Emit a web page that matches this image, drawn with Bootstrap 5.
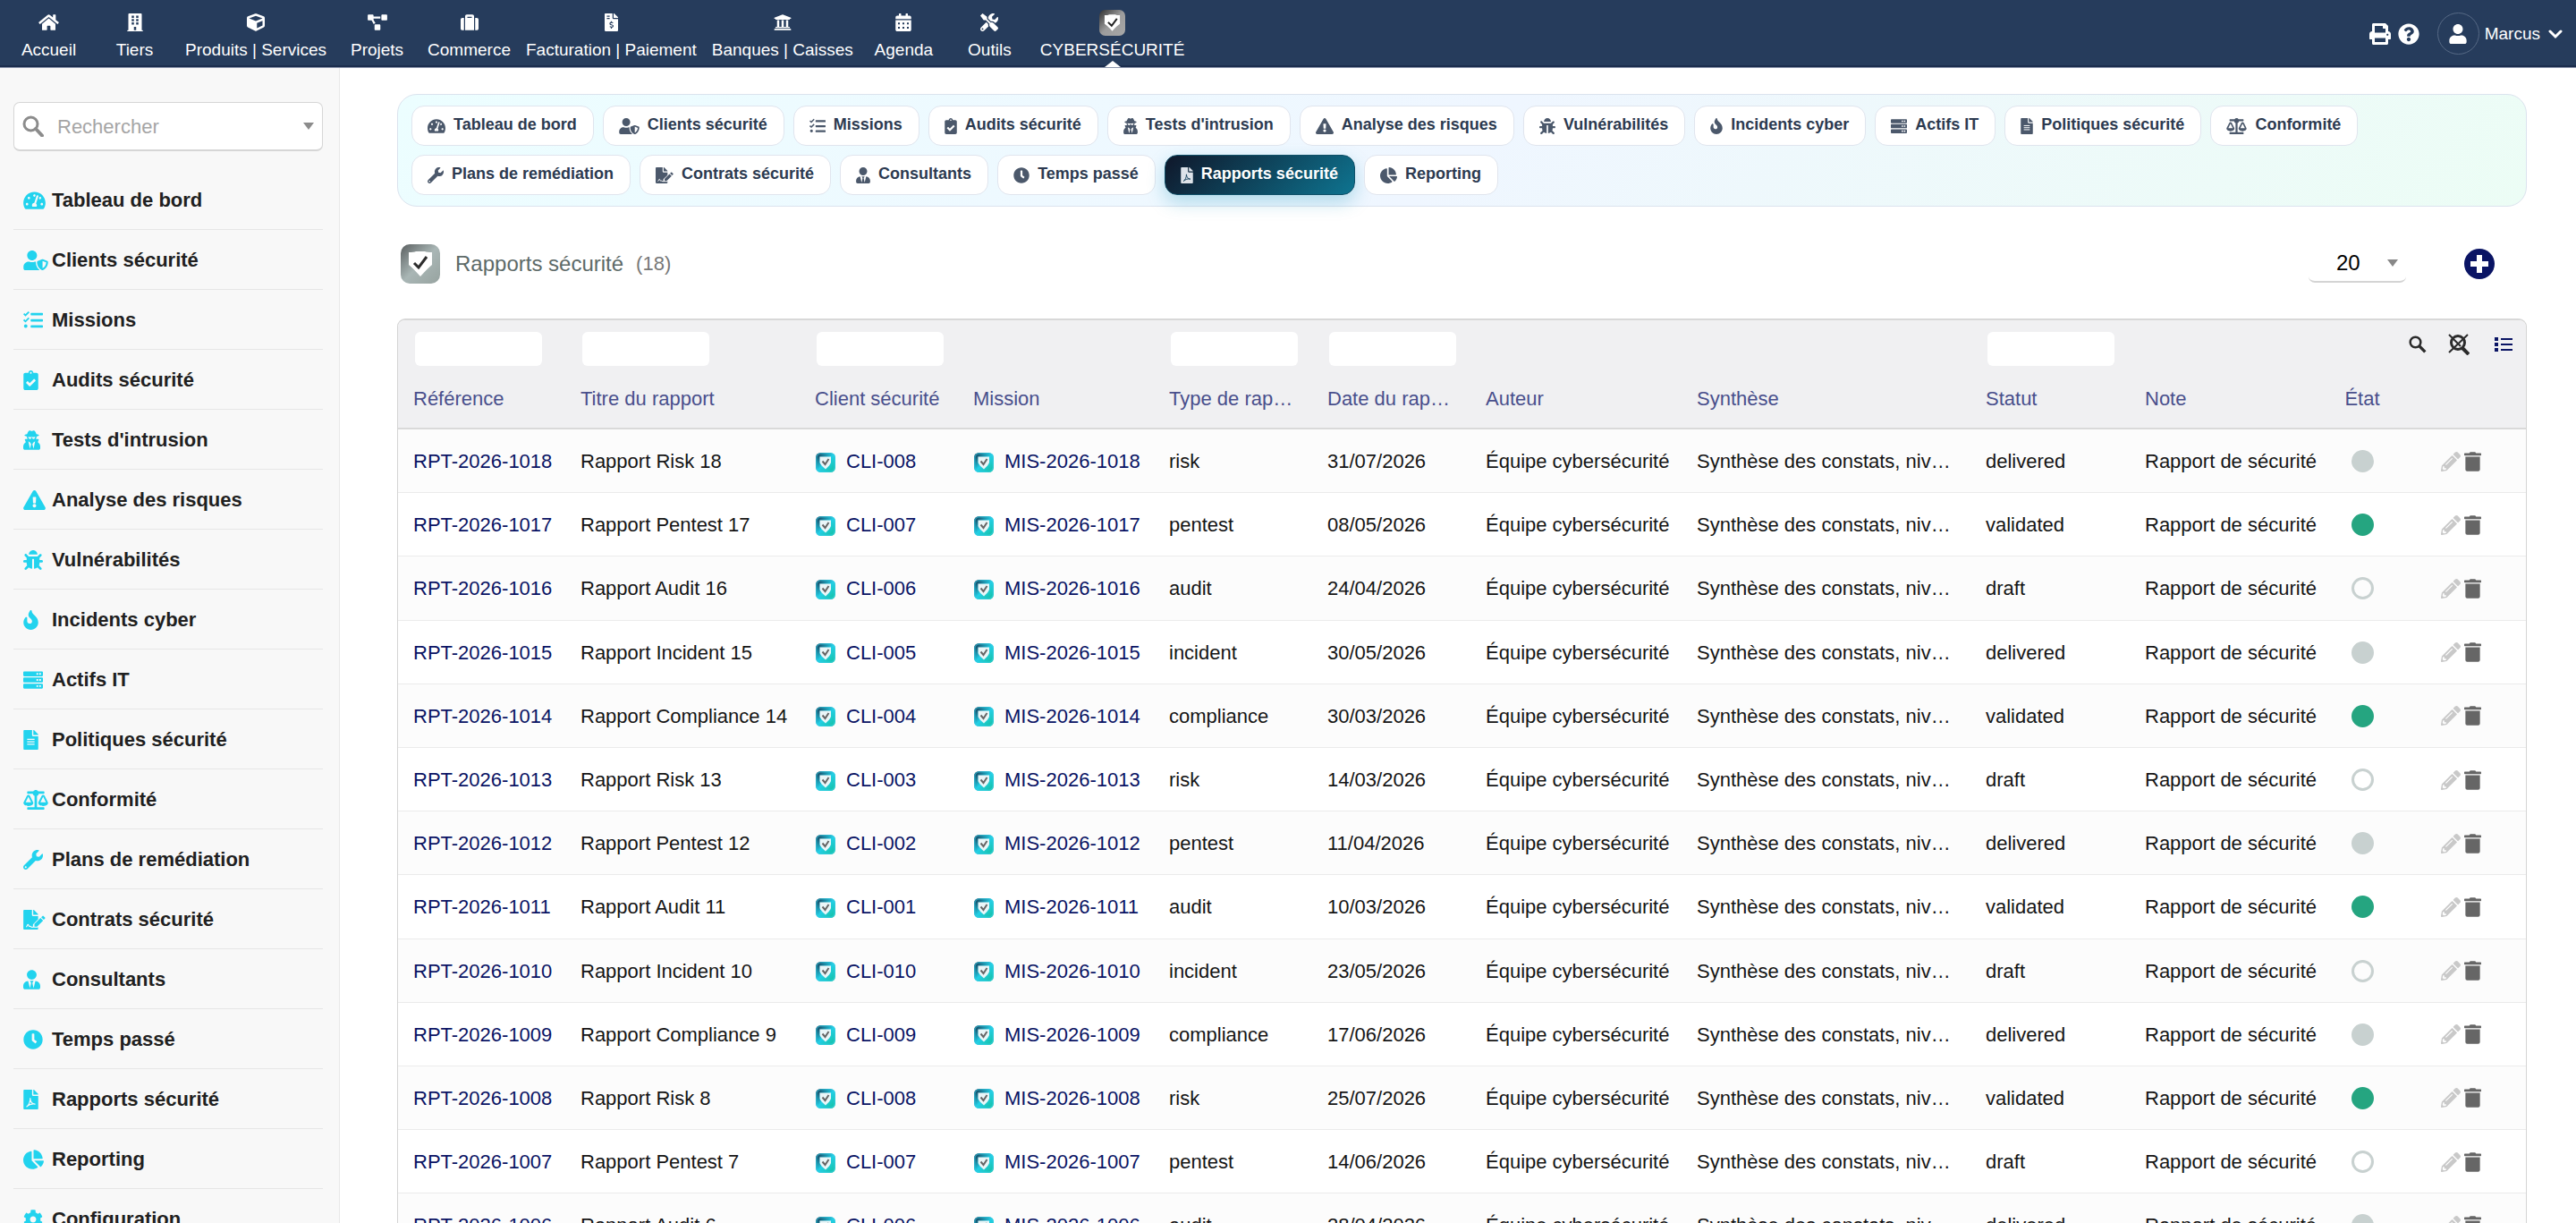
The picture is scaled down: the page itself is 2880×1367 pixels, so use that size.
<!DOCTYPE html>
<html lang="fr">
<head>
<meta charset="utf-8">
<meta name="viewport" content="width=device-width, initial-scale=1">
<title>Rapports sécurité</title>
<link href="https://cdn.jsdelivr.net/npm/bootstrap@5.3.0/dist/css/bootstrap.min.css" rel="stylesheet">
<style>
  body { font-family: "Liberation Sans", Arial, sans-serif; font-size: 22px; line-height: 1.6; color: #151515; background: #fff; }
  a { text-decoration: none; color: #0a1464; }
  .ico { display: block; flex: none; fill: currentColor; }
  .app { height: 100vh; overflow: hidden; }

  /* top bar */
  .topbar { --cut: #263c5c; height: 76px; padding: 0 15px 0 7px; background: #263c5c; border-bottom: 1px solid #8a93aa; box-shadow: inset 0 -2px 0 #1b2d4d; font-size: 19px; line-height: 24px; }
  .topbar a { color: #fff; }
  .menu-item { min-width: 96px; height: 75px; padding: 12px 9px 0 8px; position: relative; }
  .menu-item .pic { height: 26px; margin-bottom: 6px; }
  .menu-item .pic .app-ico { width: 29px; height: 29px; }
  .menu-item.current::after { content: ""; position: absolute; bottom: 0; left: 50%; margin-left: -9px; border: 9px solid transparent; border-top: 0; border-bottom: 7px solid #fff; }
  .avatar-ring { width: 47px; height: 47px; border: 1px solid #566985; }
  .user-name { margin: 0 9px 0 6px; }

  /* left column */
  .side { width: 380px; flex: none; padding: 38px 18px 0 15px; background: #f8f8f8; border-right: 1px solid #e8e8e8; }
  .side-search { height: 55px; padding: 0 9px 0 9px; border: 1px solid #d6d6d6; border-bottom-width: 2px; border-radius: 7px; background: #fff; color: #8c8c8c; }
  .side-search input { border: 0; outline: 0; background: none; padding: 2px 0 0 15px; min-width: 0; }
  .side-search input::placeholder { color: #a5a5a5; opacity: 1; }
  .side-list { --cut: #f8f8f8; margin-top: 21px; }
  .side-list a { height: 67px; padding-top: 1px; padding-left: 11px; border-bottom: 1px solid #e6e6e6; color: #202020; font-weight: 700; }
  .side-list .pic { width: 32px; color: #22d3ee; }

  /* shortcut panel */
  .main { min-width: 0; padding: 29px 55px 0 64px; }
  .panel { --cut: #fff; gap: 10px; padding: 12px 15px; border: 1px solid #dbe3ee; border-radius: 22px; background: linear-gradient(135deg, #ecfeff 0%, #eff6ff 50%, #ecfdf5 100%); }
  .tab { gap: 9px; height: 45px; padding: 0 18px 3px 17px; border: 1px solid #e0e5ee; border-radius: 14px; background: #fff; color: #2c3a50; font-size: 18px; font-weight: 700; line-height: 24px; }
  .tab .ico { margin-top: 3px; color: #4b586b; }
  .tab.current { --cut: #12405a; color: #fff; border-color: #0f5068; background: linear-gradient(135deg, #0f172a, #0e7490); box-shadow: 0 8px 20px rgba(14, 145, 178, .28); }
  .tab.current .ico { color: #dde3e9; }

  /* title line */
  .title-line { height: 44px; margin-top: 42px; padding: 0 36px 0 4px; }
  .title-line .app-ico { width: 44px; height: 44px; }
  .title-line h1 { margin: 0 14px 0 17px; font-size: 24px; font-weight: 400; line-height: 30px; color: #5d6a68; }
  .title-line .total { color: #777; }
  .limit { width: 109px; height: 42px; padding-right: 9px; border-bottom: 2px solid #d4d4d4; border-radius: 7px; color: #888; }
  .limit select { appearance: none; border: 0; outline: 0; background: none; padding: 0 0 0 31px; font-size: 24px; line-height: 30px; color: #000; }
  .add { margin-left: 65px; border: 0; background: none; padding: 0; color: #0a1464; }

  /* list */
  .list-box { margin-top: 39px; border: 1px solid #d4d4d4; border-top: 2px solid #d8d8d8; border-radius: 9px 9px 0 0; overflow: hidden; }
  .list { width: 100%; table-layout: fixed; border-collapse: separate; border-spacing: 0; }
  .list th, .list td { padding: 0 13px 0 17px; white-space: nowrap; overflow: hidden; text-overflow: ellipsis; font-weight: 400; }
  .list thead { background: #f0f0f2; color: #494f8c; }
  .list .filters td { height: 56px; padding-top: 13px; padding-right: 0; vertical-align: top; }
  .list .filters input { display: block; width: 142px; height: 38px; margin-left: 2px; border: 0; border-radius: 6px; background: #fff; padding: 0 6px; }
  .list .filters button { border: 0; background: none; padding: 0; color: #2b2b2b; }
  .list .filters .tools { height: 28px; }
  .list .titles th { height: 66px; border-bottom: 2px solid #d9d9d9; }
  .list tbody td { padding-top: 18px; padding-bottom: 17px; border-bottom: 1px solid #ebebeb; }
  .list tbody tr:nth-child(odd) { background: #fcfcfc; }
  .list .ref-link .app-ico { width: 22px; height: 22px; margin-top: 2px; }
  .list .ref-link { gap: 12px; padding-left: 1px; }
  .list td.note { padding-right: 0; }
  .list .narrow, .list td.narrow { padding-left: 0; padding-right: 0; text-align: center; }
  .dot { width: 25px; height: 25px; border: 3px solid #c8d1d0; border-radius: 50%; }
  .dot.delivered { background: #c8d1d0; }
  .dot.validated { background: #25a580; border-color: #25a580; }
  .edit { color: #c9c9c9; }
  .remove { color: #666; }
</style>
</head>
<body>

<svg width="0" height="0" class="position-absolute" aria-hidden="true">
  <defs>
    <linearGradient id="gCyan" x1="0" y1="0" x2="1" y2="1"><stop offset="0" stop-color="#10213f"/><stop offset=".5" stop-color="#22cfe6"/><stop offset="1" stop-color="#12bf9a"/></linearGradient>
    <linearGradient id="gGrey" x1="0" y1="0" x2="1" y2="1"><stop offset="0" stop-color="#303030"/><stop offset=".5" stop-color="#9c9c9c"/><stop offset="1" stop-color="#a8a8a8"/></linearGradient>
    <linearGradient id="gSage" x1="0" y1="0" x2="1" y2="1"><stop offset="0" stop-color="#5a5f60"/><stop offset=".5" stop-color="#a9b6b5"/><stop offset="1" stop-color="#97a3a0"/></linearGradient>
  </defs>
  <symbol id="a-cyan" viewBox="0 0 44 44"><rect width="44" height="44" rx="11" fill="url(#gCyan)"/><rect x="1.500" y="1.500" width="41" height="41" rx="10" fill="none" stroke="#35cfe6" stroke-opacity=".6" stroke-width="3"/><path d="M9 9h25v13q-2 6-12 15Q11 28 9 22z" fill="#eaf6f8"/><path d="M15 19l6 7 8-12" fill="none" stroke="#666" stroke-width="4"/></symbol>
  <symbol id="a-grey" viewBox="0 0 44 44"><rect width="44" height="44" rx="10" fill="url(#gGrey)"/><path d="M9 9h5l3-1h10l3 1h5v15q-5 3-13 12Q14 27 9 24z" fill="#fff"/><path d="M15 21l6 6 9-12" fill="none" stroke="#222" stroke-width="3"/></symbol>
  <symbol id="a-sage" viewBox="0 0 44 44"><rect width="44" height="44" rx="10" fill="url(#gSage)"/><path d="M9 9q6 0 8-1h10q2 1 8 1v14q-4 3-13 13Q13 26 9 23z" fill="#fff"/><path d="M15 21l5 5 9-12" fill="none" stroke="#2c2c2c" stroke-width="3"/></symbol>

  <symbol id="i-home" viewBox="0 0 576 512"><path d="M280.37 148.26L96 300.11V464a16 16 0 0 0 16 16l112.06-.29a16 16 0 0 0 15.92-16V368a16 16 0 0 1 16-16h64a16 16 0 0 1 16 16v95.64a16 16 0 0 0 16 16.05L464 480a16 16 0 0 0 16-16V300L295.67 148.26a12.19 12.19 0 0 0-15.3 0zM571.6 251.47L488 182.56V44.05a12 12 0 0 0-12-12h-56a12 12 0 0 0-12 12v72.61L318.47 43a48 48 0 0 0-61 0L4.34 251.47a12 12 0 0 0-1.6 16.9l25.5 31A12 12 0 0 0 45.15 301l235.22-193.74a12.19 12.19 0 0 1 15.3 0L530.9 301a12 12 0 0 0 16.9-1.6l25.5-31a12 12 0 0 0-1.7-16.93z"/></symbol>
  <symbol id="i-building" viewBox="0 0 448 512"><path fill-rule="evenodd" d="M436 480h-20V24a24 24 0 0 0-24-24H56a24 24 0 0 0-24 24v456H12a12 12 0 0 0-12 12v20h448v-20a12 12 0 0 0-12-12zM128 64h64v64h-64zM256 64h64v64h-64zM128 160h64v64h-64zM256 160h64v64h-64zM128 256h64v64h-64zM256 256h64v64h-64zM192 384h64v96h-64z"/></symbol>
  <symbol id="i-cube" viewBox="0 0 512 512"><path d="M239.1 6.3l-208 78c-18.7 7-31.1 25-31.1 45v225.1c0 18.2 10.3 34.8 26.5 42.9l208 104c13.5 6.8 29.4 6.8 42.9 0l208-104c16.3-8.1 26.5-24.8 26.5-42.9V129.3c0-20-12.4-37.9-31.1-44.9l-208-78C262 2.2 250 2.2 239.1 6.3zM256 68.4l192 72v1.1l-192 78-192-78v-1.1l192-72zm32 356V275.5l160-65v133.9l-160 80z"/></symbol>
  <symbol id="i-diagram" viewBox="-32 -32 704 576"><path d="M384 320H256c-17.67 0-32 14.33-32 32v128c0 17.67 14.33 32 32 32h128c17.67 0 32-14.33 32-32V352c0-17.67-14.33-32-32-32zM192 32c0-17.67-14.33-32-32-32H32C14.33 0 0 14.33 0 32v128c0 17.67 14.33 32 32 32h95.72l73.16 128.04C211.98 300.98 232.4 288 256 288h.28L192 175.51V128h224V64H192V32zM608 0H480c-17.67 0-32 14.33-32 32v128c0 17.67 14.33 32 32 32h128c17.67 0 32-14.33 32-32V32c0-17.67-14.33-32-32-32z"/></symbol>
  <symbol id="i-suitcase" viewBox="0 0 512 512"><path d="M128 480h256V80c0-26.5-21.5-48-48-48H176c-26.5 0-48 21.5-48 48v400zm64-384h128v32H192V96zm320 80v256c0 26.5-21.5 48-48 48h-48V128h48c26.5 0 48 21.5 48 48zM96 480H48c-26.5 0-48-21.5-48-48V176c0-26.5 21.5-48 48-48h48v352z"/></symbol>
  <symbol id="i-invoice" viewBox="0 0 384 512"><path d="M377 105L279.1 7c-4.5-4.5-10.6-7-17-7H256v128h128v-6.1c0-6.3-2.5-12.4-7-16.9zm-153 31V0H24C10.7 0 0 10.7 0 24v464c0 13.3 10.7 24 24 24h336c13.3 0 24-10.7 24-24V160H248c-13.2 0-24-10.8-24-24z"/><path d="M64 80h80M64 144h80M240 272c-20-16-88-20-88 20 0 44 92 24 92 68 0 42-72 38-96 16M192 224v40M192 388v44" fill="none" stroke="var(--cut)" stroke-width="30"/></symbol>
  <symbol id="i-bank" viewBox="0 0 512 512"><path d="M496 128v16a8 8 0 0 1-8 8h-24v12c0 6.627-5.373 12-12 12H60c-6.627 0-12-5.373-12-12v-12H24a8 8 0 0 1-8-8v-16a8 8 0 0 1 4.941-7.392l232-88a7.996 7.996 0 0 1 6.118 0l232 88A8 8 0 0 1 496 128zm-24 304H40c-13.255 0-24 10.745-24 24v16a8 8 0 0 0 8 8h464a8 8 0 0 0 8-8v-16c0-13.255-10.745-24-24-24zM96 192v192H60c-6.627 0-12 5.373-12 12v20h416v-20c0-6.627-5.373-12-12-12h-36V192h-64v192h-64V192h-64v192h-64V192H96z"/></symbol>
  <symbol id="i-calendar" viewBox="0 0 448 512"><path fill-rule="evenodd" d="M0 464c0 26.500 21.500 48 48 48h352c26.500 0 48-21.500 48-48V192H0zM70 262h52v52H70zM198 262h52v52h-52zM326 262h52v52h-52zM70 386h52v52H70zM198 386h52v52h-52zM326 386h52v52h-52zM400 64h-48V16c0-8.800-7.200-16-16-16h-32c-8.800 0-16 7.200-16 16v48H160V16c0-8.800-7.200-16-16-16h-32c-8.800 0-16 7.200-16 16v48H48C21.500 64 0 85.500 0 112v48h448v-48c0-26.500-21.500-48-48-48z"/></symbol>
  <symbol id="i-tools" viewBox="0 0 512 512"><path d="M501.1 395.7L384 278.6c-23.1-23.1-57.6-27.6-85.4-13.9L192 158.1V96L64 0 0 64l96 128h62.1l106.6 106.6c-13.6 27.8-9.2 62.3 13.9 85.4l117.1 117.1c14.6 14.6 38.2 14.6 52.7 0l52.7-52.7c14.5-14.6 14.5-38.2 0-52.7zM331.7 225c28.3 0 54.9 11 74.9 31l19.4 19.4c15.8-6.9 30.8-16.5 43.8-29.5 37.1-37.1 49.7-89.3 37.9-136.7-2.2-9-13.5-12.1-20.1-5.5l-74.4 74.4-67.9-11.3L334 98.9l74.4-74.4c6.6-6.6 3.4-17.9-5.7-20.2-47.4-11.7-99.6.9-136.6 37.9-28.5 28.5-41.9 66.1-41.2 103.6l82.1 82.1c8.1-1.9 16.5-2.9 24.7-2.9zm-103.9 82l-56.7-56.7L18.7 402.8c-25 25-25 65.500 0 90.500s65.500 25 90.500 0l123.600-123.600c-7.600-19.900-9.900-41.600-5-62.700zM64 472c-13.200 0-24-10.800-24-24 0-13.300 10.700-24 24-24s24 10.700 24 24c0 13.200-10.700 24-24 24z"/></symbol>
  <symbol id="i-print" viewBox="0 0 512 512"><path d="M448 192V77.25c0-8.49-3.37-16.62-9.37-22.63L393.37 9.37c-6-6-14.14-9.37-22.63-9.37H96C78.33 0 64 14.33 64 32v160c-35.35 0-64 28.65-64 64v112c0 8.84 7.16 16 16 16h48v96c0 17.67 14.33 32 32 32h320c17.67 0 32-14.33 32-32v-96h48c8.84 0 16-7.16 16-16V256c0-35.35-28.65-64-64-64zm-64 256H128v-96h256v96zm0-224H128V64h192v48c0 8.84 7.16 16 16 16h48v96zm48 72c-13.25 0-24-10.75-24-24 0-13.26 10.75-24 24-24s24 10.74 24 24c0 13.25-10.75 24-24 24z"/></symbol>
  <symbol id="i-help" viewBox="0 0 512 512"><path d="M504 256c0 136.997-111.043 248-248 248S8 392.997 8 256C8 119.083 119.043 8 256 8s248 111.083 248 248zM262.655 90c-54.497 0-89.255 22.957-116.549 63.758-3.536 5.286-2.353 12.415 2.715 16.258l34.699 26.31c5.205 3.947 12.621 3.008 16.665-2.122 17.864-22.658 30.113-35.797 57.303-35.797 20.429 0 45.698 13.148 45.698 32.958 0 14.976-12.363 22.667-32.534 33.976C247.128 238.528 216 254.941 216 296v4c0 6.627 5.373 12 12 12h56c6.627 0 12-5.373 12-12v-1.333c0-28.462 83.186-29.647 83.186-106.667 0-58.002-60.165-102-116.531-102zM256 338c-25.365 0-46 20.635-46 46 0 25.364 20.635 46 46 46s46-20.636 46-46c0-25.365-20.635-46-46-46z"/></symbol>
  <symbol id="i-user" viewBox="0 0 448 512"><path d="M224 256c70.7 0 128-57.3 128-128S294.7 0 224 0 96 57.3 96 128s57.3 128 128 128zm89.6 32h-16.7c-22.2 10.2-46.9 16-72.9 16s-50.6-5.8-72.9-16h-16.7C60.2 288 0 348.2 0 422.4V464c0 26.5 21.5 48 48 48h352c26.5 0 48-21.5 48-48v-41.6c0-74.2-60.2-134.4-134.4-134.4z"/></symbol>
  <symbol id="i-chevron" viewBox="0 0 16 12"><path d="M2 3l6 6 6-6" fill="none" stroke="currentColor" stroke-width="3" stroke-linecap="round"/></symbol>
  <symbol id="i-caret" viewBox="0 0 12 8"><path d="M0 0h12L6 8z"/></symbol>
  <symbol id="i-search" viewBox="0 0 24 24"><g fill="none" stroke="currentColor" stroke-width="3"><circle cx="9.500" cy="9.500" r="7.500"/><path d="M15 15l7 7.500" stroke-width="4" stroke-linecap="round"/></g></symbol>
  <symbol id="i-find" viewBox="0 0 24 24"><g fill="none" stroke="currentColor" stroke-width="3"><circle cx="9" cy="9" r="7"/><path d="M14 14l8 8" stroke-width="4"/></g></symbol>
  <symbol id="i-unfind" viewBox="0 0 24 24"><g fill="none" stroke="currentColor" stroke-width="2"><circle cx="11" cy="10" r="7.500" stroke-width="3"/><path d="M16 16l7 7" stroke-width="4"/><path d="M1 1l13 13M22 1L1 21"/></g></symbol>
  <symbol id="i-cols" viewBox="0 0 20 18"><path d="M0 1h4v4H0zM7 2h13v2H7zM0 7h4v4H0zM7 8h13v2H7zM0 13h4v4H0zM7 14h13v2H7z"/></symbol>
  <symbol id="i-plus" viewBox="0 0 34 34"><circle cx="17" cy="17" r="17"/><path d="M17 7v20M7 17h20" stroke="#fff" stroke-width="6"/></symbol>
  <symbol id="i-trash" viewBox="0 0 448 512"><path d="M32 464a48 48 0 0 0 48 48h288a48 48 0 0 0 48-48V128H32zM432 32H312l-9.4-18.7A24 24 0 0 0 281.1 0H166.8a23.72 23.72 0 0 0-21.4 13.3L136 32H16A16 16 0 0 0 0 48v32a16 16 0 0 0 16 16h416a16 16 0 0 0 16-16V48a16 16 0 0 0-16-16z"/></symbol>
  <symbol id="i-pencil" viewBox="0 0 512 512"><path d="M497.9 142.1l-46.1 46.1c-4.7 4.7-12.3 4.7-17 0l-111-111c-4.7-4.7-4.7-12.3 0-17l46.1-46.1c18.7-18.7 49.1-18.7 67.9 0l60.1 60.1c18.8 18.7 18.8 49.1 0 67.9zM284.2 99.8L21.6 362.4.4 483.9c-2.9 16.4 11.4 30.6 27.8 27.8l121.5-21.3 262.6-262.6c4.7-4.7 4.7-12.3 0-17l-111-111c-4.8-4.7-12.4-4.7-17.1 0zM124.1 339.9c-5.5-5.5-5.5-14.3 0-19.8l154-154c5.5-5.5 14.3-5.5 19.8 0s5.5 14.3 0 19.8l-154 154c-5.5 5.5-14.3 5.5-19.8 0zM88 424h48v36.3l-64.5 11.3-31.1-31.1L51.7 376H88v48z"/></symbol>

  <symbol id="i-gauge" viewBox="0 0 576 512"><path d="M288 32C128.94 32 0 160.94 0 320c0 52.8 14.25 102.26 39.06 144.8 5.61 9.62 16.3 15.2 27.44 15.2h443c11.14 0 21.83-5.58 27.44-15.2C561.75 422.26 576 372.8 576 320c0-159.06-128.94-288-288-288zm0 64c14.71 0 26.58 10.13 30.32 23.65-1.11 2.26-2.64 4.23-3.45 6.67l-9.22 27.67c-5.13 3.49-10.97 6.01-17.64 6.01-17.67 0-32-14.33-32-32S270.33 96 288 96zM96 384c-17.67 0-32-14.33-32-32s14.33-32 32-32 32 14.33 32 32-14.33 32-32 32zm48-160c-17.67 0-32-14.33-32-32s14.33-32 32-32 32 14.33 32 32-14.33 32-32 32zm246.77-72.41l-61.33 184C343.13 347.33 352 364.54 352 384c0 11.72-3.38 22.55-8.88 32H232.88c-5.5-9.45-8.88-20.28-8.88-32 0-33.94 26.5-61.43 59.9-63.59l61.34-184.01c4.17-12.56 17.73-19.45 30.36-15.17 12.57 4.19 19.35 17.79 15.17 30.36zm14.66 57.2l15.52-46.55c3.47-1.29 7.13-2.23 11.05-2.23 17.67 0 32 14.33 32 32s-14.33 32-32 32c-11.38-.01-20.89-6.28-26.57-15.22zM480 384c-17.67 0-32-14.33-32-32s14.33-32 32-32 32 14.33 32 32-14.33 32-32 32z"/></symbol>
  <symbol id="i-shielduser" viewBox="0 0 640 512"><path d="M622.3 271.1l-115.2-45c-4.1-1.6-12.6-3.7-22.2 0l-115.2 45c-10.7 4.2-17.7 14-17.7 24.9 0 111.6 68.7 188.8 132.9 213.9 9.6 3.7 18 1.6 22.2 0C558.4 489.9 640 420.5 640 296c0-10.9-7-20.7-17.7-24.9zM496 462.4V273.3l95.5 37.3c-5.6 87.1-60.9 135.4-95.5 151.8zM224 256c70.7 0 128-57.3 128-128S294.7 0 224 0 96 57.3 96 128s57.3 128 128 128zm96 40c0-2.5.8-4.8 1.1-7.2-2.5-.1-4.9-.8-7.5-.8h-16.7c-22.2 10.2-46.9 16-72.9 16s-50.6-5.8-72.9-16h-16.7C60.2 288 0 348.2 0 422.4V464c0 26.5 21.5 48 48 48h352c6.8 0 13.3-1.5 19.2-4-54-42.9-99.2-116.7-99.2-212z"/></symbol>
  <symbol id="i-tasks" viewBox="0 0 512 512"><path d="M208 64h288a16 16 0 0 1 16 16v32a16 16 0 0 1-16 16H208a16 16 0 0 1-16-16V80a16 16 0 0 1 16-16zM208 224h288a16 16 0 0 1 16 16v32a16 16 0 0 1-16 16H208a16 16 0 0 1-16-16v-32a16 16 0 0 1 16-16zM208 384h288a16 16 0 0 1 16 16v32a16 16 0 0 1-16 16H208a16 16 0 0 1-16-16v-32a16 16 0 0 1 16-16zM64 362a46 46 0 1 1 0 92 46 46 0 0 1 0-92z"/><path d="M14 84l44 42 90-90M14 244l44 42 90-90" fill="none" stroke="currentColor" stroke-width="42"/></symbol>
  <symbol id="i-clipboard" viewBox="0 0 384 512"><path d="M336 64h-80c0-35.3-28.7-64-64-64s-64 28.7-64 64H48C21.5 64 0 85.5 0 112v352c0 26.5 21.5 48 48 48h288c26.5 0 48-21.5 48-48V112c0-26.5-21.5-48-48-48zM192 40c13.3 0 24 10.7 24 24s-10.7 24-24 24-24-10.7-24-24 10.7-24 24-24zm121.2 231.8l-143 141.8c-4.7 4.7-12.3 4.6-17-.1l-82.6-83.3c-4.7-4.7-4.6-12.3.1-17L99.1 285c4.7-4.7 12.3-4.6 17 .1l46 46.4 106-105.2c4.7-4.7 12.3-4.6 17 .1l28.2 28.4c4.7 4.8 4.6 12.3-.1 17z"/></symbol>
  <symbol id="i-secret" viewBox="0 0 448 512"><path d="M383.9 308.3l23.9-62.6c4-10.5-3.7-21.7-15-21.7h-58.5c11-18.9 17.8-40.6 17.8-64v-.3c39.2-7.8 64-19.1 64-31.7 0-13.3-27.3-25.1-70.1-33-9.2-32.8-27-65.8-40.6-82.8-9.5-11.9-25.9-15.6-39.5-8.8l-27.6 13.8c-9 4.5-19.6 4.5-28.6 0L182.1 3.4c-13.6-6.8-30-3.1-39.5 8.8-13.5 17-31.4 50-40.6 82.8-42.7 7.9-70 19.7-70 33 0 12.6 24.8 23.9 64 31.7v.3c0 23.4 6.8 45.1 17.8 64H56.3c-11.5 0-19.2 11.7-14.7 22.3l25.8 60.2C27.3 329.8 0 372.7 0 422.4v44.8C0 491.9 20.1 512 44.8 512h358.4c24.7 0 44.8-20.1 44.8-44.8v-44.8c0-48.4-25.8-90.4-64.1-114.1zM176 480l-41.6-192 49.6 32 24 40-32 120zm96 0l-32-120 24-40 49.6-32L272 480zm41.7-298.5c-3.9 11.9-7 24.6-16.5 33.4-10.1 9.3-48 22.4-64-25-2.8-8.4-15.4-8.4-18.3 0-17 50.2-56 32.4-64 25-9.5-8.8-12.7-21.5-16.5-33.4-.8-2.5-6.3-5.7-6.3-5.8v-10.8c28.3 3.6 61 5.8 96 5.8s67.7-2.1 96-5.8v10.8c-.1.1-5.6 3.2-6.4 5.8z"/></symbol>
  <symbol id="i-warn" viewBox="0 0 576 512"><path d="M569.517 440.013C587.975 472.007 564.806 512 527.94 512H48.054c-36.937 0-59.999-40.055-41.577-71.987L246.423 23.985c18.467-32.009 64.72-31.951 83.154 0l239.94 416.028zM288 354c-25.405 0-46 20.595-46 46s20.595 46 46 46 46-20.595 46-46-20.595-46-46-46zm-43.673-165.346l7.418 136c.347 6.364 5.609 11.346 11.982 11.346h48.546c6.373 0 11.635-4.982 11.982-11.346l7.418-136c.375-6.874-5.098-12.654-11.982-12.654h-63.383c-6.884 0-12.356 5.78-11.981 12.654z"/></symbol>
  <symbol id="i-bug" viewBox="0 0 512 512"><path d="M511.988 288.9c-.478 17.43-15.217 31.1-32.653 31.1H424v16c0 21.864-4.882 42.584-13.6 61.145l60.228 60.228c12.496 12.497 12.496 32.758 0 45.255-12.498 12.497-32.759 12.496-45.256 0l-54.736-54.736C345.886 467.965 314.351 480 280 480V236c0-6.627-5.373-12-12-12h-24c-6.627 0-12 5.373-12 12v244c-34.351 0-65.886-12.035-90.636-32.108l-54.736 54.736c-12.498 12.497-32.759 12.496-45.256 0-12.496-12.497-12.496-32.758 0-45.255l60.228-60.228C92.882 378.584 88 357.864 88 336v-16H32.666C15.23 320 .491 306.33.013 288.9-.484 270.816 14.028 256 32 256h56v-58.745l-46.628-46.628c-12.496-12.497-12.496-32.758 0-45.255 12.498-12.497 32.758-12.497 45.256 0L141.255 160h229.489l54.627-54.627c12.498-12.497 32.758-12.497 45.256 0 12.496 12.497 12.496 32.758 0 45.255L424 197.255V256h56c17.972 0 32.484 14.816 31.988 32.9zM257 0c-61.856 0-112 50.144-112 112h224C369 50.144 318.856 0 257 0z"/></symbol>
  <symbol id="i-fire" viewBox="0 0 384 512"><path d="M216 23.86c0-23.8-30.65-32.77-44.15-13.04C48 191.85 224 200 224 288c0 35.63-29.11 64.46-64.85 63.99-35.17-.45-63.15-29.77-63.15-64.94v-85.51c0-21.7-26.47-32.23-41.43-16.5C27.8 213.16 0 261.33 0 320c0 105.87 86.13 192 192 192s192-86.13 192-192c0-170.29-168-193-168-296.14z"/></symbol>
  <symbol id="i-server" viewBox="0 0 512 512"><path fill-rule="evenodd" d="M24 32h464a24 24 0 0 1 24 24v80a24 24 0 0 1-24 24H24a24 24 0 0 1-24-24V56a24 24 0 0 1 24-24zM24 192h464a24 24 0 0 1 24 24v80a24 24 0 0 1-24 24H24a24 24 0 0 1-24-24v-80a24 24 0 0 1 24-24zM24 352h464a24 24 0 0 1 24 24v80a24 24 0 0 1-24 24H24a24 24 0 0 1-24-24v-80a24 24 0 0 1 24-24zM344 76h44v44h-44zM416 76h44v44h-44zM344 234h44v44h-44zM416 234h44v44h-44zM344 394h44v44h-44zM416 394h44v44h-44z"/></symbol>
  <symbol id="i-file" viewBox="0 0 384 512"><path d="M377 105L279.1 7c-4.500-4.500-10.600-7-17-7H256v128h128v-6.100c0-6.300-2.500-12.400-7-16.900zm-153 31V0H24C10.700 0 0 10.700 0 24v464c0 13.300 10.700 24 24 24h336c13.300 0 24-10.700 24-24V160H248c-13.200 0-24-10.800-24-24z"/><path d="M96 240h192M96 304h192M96 368h192" stroke="var(--cut)" stroke-width="28"/></symbol>
  <symbol id="i-scale" viewBox="0 0 640 512"><path d="M256 336h-.02c0-16.18 1.34-8.73-85.05-181.51-17.65-35.29-68.19-35.36-85.87 0C-2.06 328.75.02 320.33.02 336H0c0 44.18 57.31 80 128 80s128-35.82 128-80zM128 176l72 144H56l72-144zm511.98 160c0-16.18 1.34-8.73-85.05-181.51-17.65-35.29-68.19-35.36-85.87 0-87.12 174.26-85.04 165.84-85.04 181.51H384c0 44.18 57.31 80 128 80s128-35.82 128-80h-.02zM440 320l72-144 72 144H440zm88 128H352V153.25c23.51-10.29 41.16-31.48 46.39-57.25H528c8.84 0 16-7.16 16-16V48c0-8.84-7.16-16-16-16H383.64C369.04 12.68 346.09 0 320 0s-49.04 12.68-63.64 32H112c-8.84 0-16 7.16-16 16v32c0 8.84 7.16 16 16 16h129.61c5.23 25.76 22.87 46.96 46.39 57.25V448H112c-8.84 0-16 7.16-16 16v32c0 8.84 7.16 16 16 16h416c8.84 0 16-7.16 16-16v-32c0-8.84-7.16-16-16-16z"/></symbol>
  <symbol id="i-wrench" viewBox="0 0 512 512"><path d="M507.73 109.1c-2.24-9.03-13.54-12.09-20.12-5.51l-74.36 74.36-67.88-11.31-11.31-67.88 74.36-74.36c6.62-6.62 3.43-17.9-5.66-20.16-47.38-11.74-99.55.91-136.58 37.93-39.64 39.64-50.55 97.1-34.05 147.2L18.74 402.76c-24.99 24.99-24.99 65.51 0 90.5 24.99 24.99 65.51 24.99 90.5 0l213.21-213.21c50.12 16.71 107.47 5.68 147.37-34.22 37.07-37.07 49.7-89.32 37.91-136.73zM64 472c-13.25 0-24-10.75-24-24 0-13.26 10.75-24 24-24s24 10.74 24 24c0 13.25-10.75 24-24 24z"/></symbol>
  <symbol id="i-sign" viewBox="0 0 576 512"><path d="M377 105L279.1 7c-4.500-4.500-10.600-7-17-7H256v128h128v-6.100c0-6.300-2.500-12.400-7-16.900zM224 136V0H24C10.700 0 0 10.700 0 24v464c0 13.300 10.700 24 24 24h336c13.300 0 24-10.700 24-24v-40h-70L250 448V380L384 246V160H248c-13.200 0-24-10.800-24-24z"/><path d="M72 440c30 0 30-60 48-60s18 50 38 50 26-8 40 8 40 10 60 10h126" fill="none" stroke="var(--cut)" stroke-width="28"/><path d="M288 368l158-158 68 68-158 158h-68zM464 192l32-32q14-12 28 0l38 38q12 14 0 28l-32 32z"/></symbol>
  <symbol id="i-tie" viewBox="0 0 448 512"><path d="M224 256c70.7 0 128-57.3 128-128S294.7 0 224 0 96 57.3 96 128s57.3 128 128 128zm95.8 32.6L272 480l-32-136 32-56h-96l32 56-32 136-47.8-191.4C56.9 292 0 350.3 0 422.4V464c0 26.5 21.5 48 48 48h352c26.5 0 48-21.5 48-48v-41.6c0-72.1-56.9-130.4-128.2-133.8z"/></symbol>
  <symbol id="i-clock" viewBox="0 0 512 512"><path d="M256,8C119,8,8,119,8,256S119,504,256,504,504,393,504,256,393,8,256,8Zm92.49,313h0l-20,25a16,16,0,0,1-22.49,2.5h0l-67-49.72a40,40,0,0,1-15-31.23V112a16,16,0,0,1,16-16h32a16,16,0,0,1,16,16V256l58,42.5A16,16,0,0,1,348.49,321Z"/></symbol>
  <symbol id="i-pdf" viewBox="0 0 384 512"><path d="M377 105L279.1 7c-4.500-4.500-10.600-7-17-7H256v128h128v-6.100c0-6.300-2.500-12.400-7-16.900zm-153 31V0H24C10.700 0 0 10.700 0 24v464c0 13.300 10.700 24 24 24h336c13.300 0 24-10.700 24-24V160H248c-13.200 0-24-10.800-24-24z"/><path d="M84 440c50-30 96-130 92-216 4 90 50 150 124 150-80-16-150 4-216 66z" fill="none" stroke="var(--cut)" stroke-width="26" stroke-linejoin="round"/></symbol>
  <symbol id="i-pie" viewBox="0 0 544 512"><path d="M527.79 288H290.5l158.03 158.03c6.04 6.04 15.98 6.53 22.19.68 38.7-36.46 65.32-85.61 73.13-140.86 1.34-9.46-6.51-17.85-16.06-17.85zm-15.83-64.8C503.72 103.74 408.26 8.28 288.8.04 279.68-.59 272 7.1 272 16.24V240h223.77c9.14 0 16.82-7.68 16.19-16.8zM224 288V50.71c0-9.55-8.39-17.4-17.84-16.06C86.99 51.49-4.1 155.6.14 280.37 4.5 408.51 114.83 513.59 243.03 511.98c50.4-.63 96.97-16.87 135.26-44.03 7.9-5.6 8.42-17.23 1.57-24.08L224 288z"/></symbol>
  <symbol id="i-cog" viewBox="0 0 512 512"><path d="M487.4 315.7l-42.6-24.6c4.3-23.2 4.3-47 0-70.2l42.6-24.6c4.9-2.8 7.1-8.6 5.5-14-11.1-35.6-30-67.8-54.7-94.6-3.8-4.1-10-5.1-14.8-2.3L380.8 110c-17.9-15.4-38.5-27.3-60.8-35.1V25.8c0-5.6-3.9-10.5-9.4-11.7-36.7-8.2-74.3-7.8-109.2 0-5.5 1.2-9.4 6.1-9.4 11.7V75c-22.2 7.9-42.8 19.8-60.8 35.1L88.7 85.5c-4.9-2.8-11-1.9-14.8 2.3-24.7 26.7-43.6 58.9-54.7 94.6-1.7 5.4.6 11.2 5.5 14L67.3 221c-4.3 23.2-4.3 47 0 70.2l-42.6 24.6c-4.9 2.8-7.1 8.6-5.5 14 11.1 35.6 30 67.8 54.7 94.6 3.8 4.1 10 5.1 14.8 2.3l42.6-24.6c17.9 15.4 38.5 27.3 60.8 35.1v49.2c0 5.6 3.9 10.5 9.4 11.7 36.7 8.2 74.3 7.8 109.2 0 5.5-1.2 9.4-6.1 9.4-11.7v-49.2c22.2-7.9 42.8-19.8 60.8-35.1l42.6 24.6c4.9 2.8 11 1.9 14.8-2.3 24.7-26.7 43.6-58.9 54.7-94.6 1.5-5.5-.7-11.3-5.6-14.1zM256 336c-44.1 0-80-35.9-80-80s35.9-80 80-80 80 35.9 80 80-35.9 80-80 80z"/></symbol>
</svg>

<div class="app d-flex flex-column">
  <header class="topbar d-flex flex-shrink-0 align-items-center justify-content-between">
    <nav class="d-flex" id="topMenu" aria-label="Menu principal"></nav>
    <div class="d-flex align-items-center">
      <a href="#" aria-label="Imprimer"><svg class="ico" width="24" height="24"><use href="#i-print"/></svg></a>
      <a href="#" class="ms-2 me-3" aria-label="Aide"><svg class="ico" width="24" height="24"><use href="#i-help"/></svg></a>
      <a href="#" class="d-flex align-items-center ms-1">
        <span class="avatar-ring rounded-circle d-flex align-items-center justify-content-center"><svg class="ico" width="20" height="22"><use href="#i-user"/></svg></span>
        <span class="user-name">Marcus</span>
        <svg class="ico" width="16" height="12"><use href="#i-chevron"/></svg>
      </a>
    </div>
  </header>

  <div class="d-flex flex-grow-1 overflow-hidden">
    <aside class="side">
      <div class="side-search d-flex align-items-center">
        <svg class="ico" width="24" height="24"><use href="#i-search"/></svg>
        <input type="text" class="flex-grow-1" placeholder="Rechercher" aria-label="Rechercher">
        <svg class="ico" width="12" height="8"><use href="#i-caret"/></svg>
      </div>
      <nav class="side-list d-flex flex-column" id="sideMenu" aria-label="Menu du module"></nav>
    </aside>

    <main class="main flex-grow-1">
      <nav class="panel d-flex flex-wrap" id="tabs" aria-label="Raccourcis"></nav>

      <div class="title-line d-flex align-items-center">
        <svg class="app-ico"><use href="#a-sage"/></svg>
        <h1>Rapports sécurité</h1>
        <span class="total me-auto">(18)</span>
        <div class="limit d-flex align-items-center">
          <select class="flex-grow-1" aria-label="Lignes par page"><option>20</option><option>50</option></select>
          <svg class="ico" width="12" height="8"><use href="#i-caret"/></svg>
        </div>
        <button type="button" class="add" aria-label="Nouveau rapport"><svg class="ico" width="34" height="34"><use href="#i-plus"/></svg></button>
      </div>

      <div class="list-box">
        <table class="list">
          <colgroup>
            <col width="187"><col width="262"><col width="177"><col width="219"><col width="177"><col width="177"><col width="236"><col><col width="178"><col width="223"><col width="74"><col width="146">
          </colgroup>
          <thead>
            <tr class="filters">
              <td><input type="text" aria-label="Référence"></td>
              <td><input type="text" aria-label="Titre du rapport"></td>
              <td><input type="text" aria-label="Client sécurité"></td>
              <td></td>
              <td><input type="text" aria-label="Type de rapport"></td>
              <td><input type="text" aria-label="Date du rapport"></td>
              <td></td><td></td>
              <td><input type="text" aria-label="Statut"></td>
              <td></td><td></td>
              <td class="narrow">
                <div class="tools d-flex align-items-center justify-content-center gap-4">
                  <button type="button" aria-label="Rechercher"><svg class="ico" width="20" height="20"><use href="#i-find"/></svg></button>
                  <button type="button" aria-label="Effacer les filtres"><svg class="ico" width="24" height="24"><use href="#i-unfind"/></svg></button>
                  <a href="#" class="ms-1" aria-label="Colonnes"><svg class="ico" width="20" height="18"><use href="#i-cols"/></svg></a>
                </div>
              </td>
            </tr>
            <tr class="titles">
              <th>Référence</th><th>Titre du rapport</th><th>Client sécurité</th><th>Mission</th><th>Type de rapport</th><th>Date du rapport</th><th>Auteur</th><th>Synthèse</th><th>Statut</th><th>Note</th><th class="narrow">État</th><th></th>
            </tr>
          </thead>
          <tbody id="rows"></tbody>
        </table>
      </div>
    </main>
  </div>
</div>

<script src="https://cdn.jsdelivr.net/npm/bootstrap@5.3.0/dist/js/bootstrap.bundle.min.js"></script>
<script>
  // An icon keeps the proportions of its symbol; h is its height in pixels.
  const icon = (id, h) => {
    const box = document.getElementById('i-' + id).viewBox.baseVal;
    return `<svg class="ico" width="${Math.round(h * box.width / box.height)}" height="${h}" aria-hidden="true"><use href="#i-${id}"/></svg>`;
  };

  const menu = [['Accueil', 'home'], ['Tiers', 'building'], ['Produits | Services', 'cube'], ['Projets', 'diagram'], ['Commerce', 'suitcase'], ['Facturation | Paiement', 'invoice'], ['Banques | Caisses', 'bank'], ['Agenda', 'calendar'], ['Outils', 'tools'], ['CYBERSÉCURITÉ', null]];
  document.getElementById('topMenu').innerHTML = menu.map(([label, id]) =>
    `<a href="#" class="menu-item d-flex flex-column align-items-center${id ? '' : ' current'}"><span class="pic d-flex align-items-center">${id ? icon(id, 20) : '<svg class="app-ico"><use href="#a-grey"/></svg>'}</span><span>${label}</span></a>`).join('');

  const pages = [['Tableau de bord', 'gauge'], ['Clients sécurité', 'shielduser'], ['Missions', 'tasks'], ['Audits sécurité', 'clipboard'], ["Tests d'intrusion", 'secret'], ['Analyse des risques', 'warn'], ['Vulnérabilités', 'bug'], ['Incidents cyber', 'fire'], ['Actifs IT', 'server'], ['Politiques sécurité', 'file'], ['Conformité', 'scale'], ['Plans de remédiation', 'wrench'], ['Contrats sécurité', 'sign'], ['Consultants', 'tie'], ['Temps passé', 'clock'], ['Rapports sécurité', 'pdf'], ['Reporting', 'pie']];
  document.getElementById('tabs').innerHTML = pages.map(([label, id]) =>
    `<a href="#" class="tab d-flex align-items-center${id === 'pdf' ? ' current' : ''}">${icon(id, 18)}<span>${label}</span></a>`).join('');
  document.getElementById('sideMenu').innerHTML = [...pages, ['Configuration', 'cog']].map(([label, id]) =>
    `<a href="#" class="d-flex align-items-center"><span class="pic">${icon(id, 22)}</span><span>${label}</span></a>`).join('');

  const dates = ['31/07/2026', '08/05/2026', '24/04/2026', '30/05/2026', '30/03/2026', '14/03/2026', '11/04/2026', '10/03/2026', '23/05/2026', '17/06/2026', '25/07/2026', '14/06/2026', '28/04/2026'];
  const kinds = ['risk', 'pentest', 'audit', 'incident', 'compliance'];
  const states = ['delivered', 'validated', 'draft'];
  const ref = text => `<a href="#" class="ref-link d-flex align-items-center"><svg class="app-ico"><use href="#a-cyan"/></svg>${text}</a>`;
  document.getElementById('rows').innerHTML = dates.map((date, i) => {
    const n = 18 - i, kind = kinds[i % 5], state = states[i % 3];
    const client = String(n > 10 ? n - 10 : n).padStart(3, '0');
    return `<tr>
      <td><a href="#">RPT-2026-${1000 + n}</a></td>
      <td>Rapport ${kind[0].toUpperCase() + kind.slice(1)} ${n}</td>
      <td>${ref('CLI-' + client)}</td>
      <td>${ref('MIS-2026-' + (1000 + n))}</td>
      <td>${kind}</td><td>${date}</td><td>Équipe cybersécurité</td>
      <td>Synthèse des constats, niveau de risque</td>
      <td>${state}</td><td class="note">Rapport de sécurité</td>
      <td class="narrow"><div class="dot ${state} mx-auto"></div></td>
      <td class="narrow"><div class="d-flex align-items-center justify-content-center gap-1"><a href="#" class="edit" aria-label="Modifier">${icon('pencil', 22)}</a><a href="#" class="remove" aria-label="Supprimer">${icon('trash', 22)}</a></div></td>
    </tr>`;
  }).join('');
</script>
</body>
</html>
